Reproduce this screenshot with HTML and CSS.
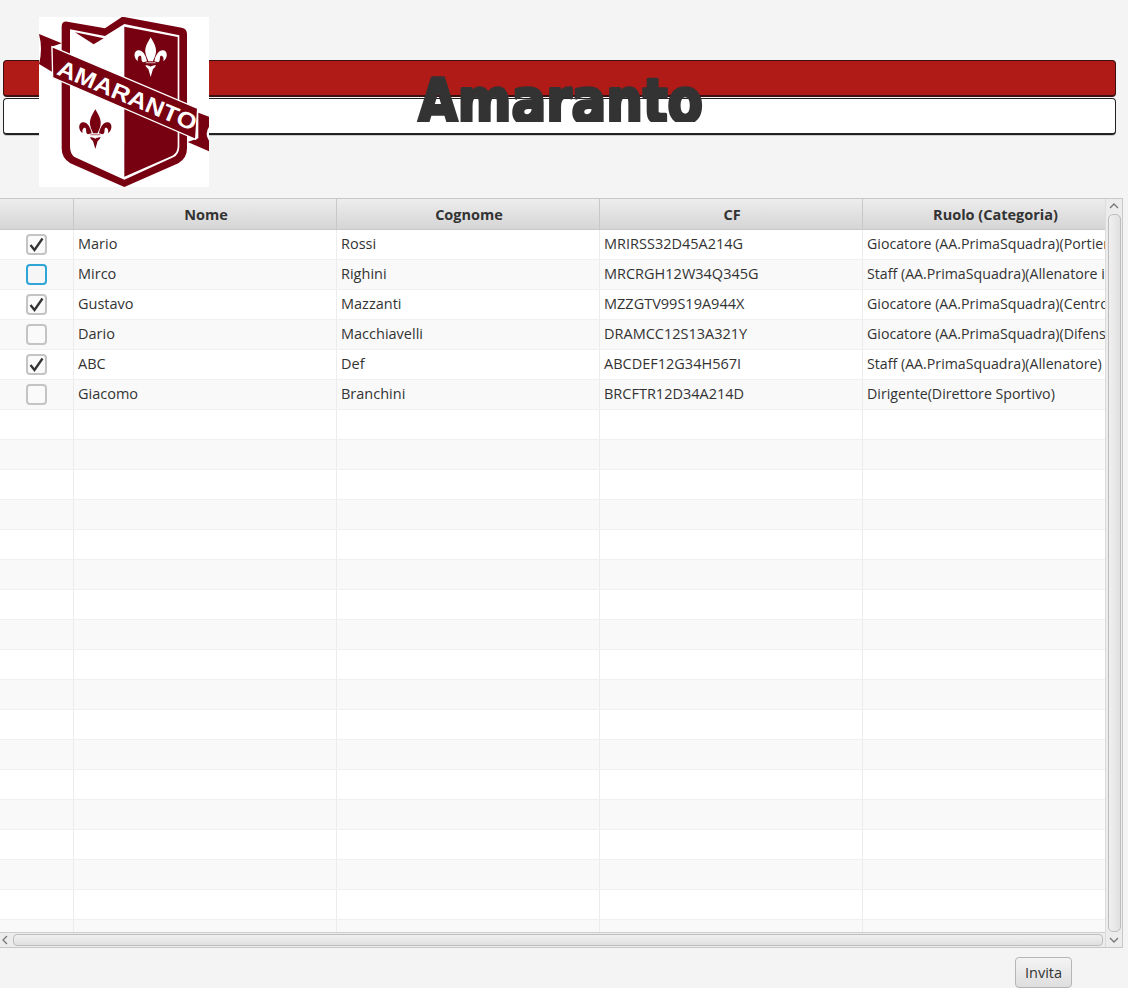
FILE: index.html
```html
<!DOCTYPE html>
<html lang="en">
<head>
  <meta charset="UTF-8" />
  <title>Amaranto</title>
  <link rel="stylesheet" href="styles.css">
</head>
<body>
  <div class="top">
    <div class="bar bar-red"></div>
    <div class="bar bar-white"></div>
    <svg class="title" viewBox="0 0 304 52" width="304" height="52">
      <text x="11" y="52" textLength="285" lengthAdjust="spacingAndGlyphs">Amaranto</text>
    </svg>
    <svg class="logo" viewBox="12 21 510 510" width="170" height="170">
      <defs>
        <g id="fleur">
          <path d="M0 0C9 16 20 32 15 50C13 60 8 66 7 72L-7 72C-8 66-13 60-15 50C-20 32-9 16 0 0Z"/>
          <path d="M11 72C15 50 27 36 39 39C53 44 50 64 38 72C41 60 34 52 29 57C26 63 30 72 22 75Z"/>
          <path d="M-11 72C-15 50-27 36-39 39C-53 44-50 64-38 72C-41 60-34 52-29 57C-26 63-30 72-22 75Z"/>
          <path d="M-16 84C-8 84-4 86 0 88C4 86 8 84 16 84C13 91 9 93 7 95L0 119L-7 95C-9 93-13 91-16 84Z"/>
        </g>
      </defs>
      <rect x="12" y="21" width="510" height="510" fill="#fff"/>
      <path fill="#770011" d="M80 50Q80 33 97 35L210 55L262 20L440 53Q456 56 456 72L456 415Q456 445 430 460L268 531L106 460Q80 445 80 415Z"/>
      <path fill="#fff" d="M105 58L210 78L268 42L433 76L433 410Q433 432 415 442L268 509L120 442Q105 432 105 410Z"/>
      <path fill="#770011" d="M268 50L428 81L428 408Q428 428 412 437L268 500Z"/>
      <path fill="#770011" d="M120 67L206 85L176 103Z"/>
      <path fill="#770011" d="M12 72L80 100L50 110L52 186L12 162Q24 118 12 72Z"/>
      <path fill="#770011" d="M522 320L522 424L458 396L490 385L490 308Z" />
      <path fill="#fff" d="M522 350Q508 372 522 392Z"/>
      <path fill="#770011" stroke="#fff" stroke-width="4" d="M51 110L488 295L482 388L53 203Z"/>
      <text class="logo-text" x="0" y="0" transform="translate(62 192) rotate(22.6)" textLength="446" lengthAdjust="spacingAndGlyphs">AMARANTO</text>
      <use href="#fleur" x="347" y="82" fill="#fff"/>
      <use href="#fleur" x="181" y="298" fill="#770011"/>
      <rect x="332" y="156" width="30" height="4" fill="#c98a92"/>
      <rect x="166" y="372" width="30" height="4" fill="#c98a92"/>
    </svg>
  </div>

  <div class="table">
    <div class="table-main">
      <div class="row head">
        <div class="cell"></div>
        <div class="cell">Nome</div>
        <div class="cell">Cognome</div>
        <div class="cell">CF</div>
        <div class="cell">Ruolo (Categoria)</div>
      </div>
      <div class="rows">
        <div class="row">
          <div class="cell check-cell"><span class="check"><svg viewBox="0 0 15 15" width="15" height="15"><path d="M1.5 8L5.5 13L13.5 1.5"/></svg></span></div>
          <div class="cell">Mario</div><div class="cell">Rossi</div><div class="cell">MRIRSS32D45A214G</div><div class="cell">Giocatore (AA.PrimaSquadra)(Portiere)</div>
        </div>
        <div class="row">
          <div class="cell check-cell"><span class="check focused"></span></div>
          <div class="cell">Mirco</div><div class="cell">Righini</div><div class="cell">MRCRGH12W34Q345G</div><div class="cell">Staff (AA.PrimaSquadra)(Allenatore in seconda)</div>
        </div>
        <div class="row">
          <div class="cell check-cell"><span class="check"><svg viewBox="0 0 15 15" width="15" height="15"><path d="M1.5 8L5.5 13L13.5 1.5"/></svg></span></div>
          <div class="cell">Gustavo</div><div class="cell">Mazzanti</div><div class="cell">MZZGTV99S19A944X</div><div class="cell">Giocatore (AA.PrimaSquadra)(Centrocampista)</div>
        </div>
        <div class="row">
          <div class="cell check-cell"><span class="check"></span></div>
          <div class="cell">Dario</div><div class="cell">Macchiavelli</div><div class="cell">DRAMCC12S13A321Y</div><div class="cell">Giocatore (AA.PrimaSquadra)(Difensore)</div>
        </div>
        <div class="row">
          <div class="cell check-cell"><span class="check"><svg viewBox="0 0 15 15" width="15" height="15"><path d="M1.5 8L5.5 13L13.5 1.5"/></svg></span></div>
          <div class="cell">ABC</div><div class="cell">Def</div><div class="cell">ABCDEF12G34H567I</div><div class="cell">Staff (AA.PrimaSquadra)(Allenatore)</div>
        </div>
        <div class="row">
          <div class="cell check-cell"><span class="check"></span></div>
          <div class="cell">Giacomo</div><div class="cell">Branchini</div><div class="cell">BRCFTR12D34A214D</div><div class="cell">Dirigente(Direttore Sportivo)</div>
        </div>
        <div class="row"><div class="cell"></div><div class="cell"></div><div class="cell"></div><div class="cell"></div><div class="cell"></div></div>
        <div class="row"><div class="cell"></div><div class="cell"></div><div class="cell"></div><div class="cell"></div><div class="cell"></div></div>
        <div class="row"><div class="cell"></div><div class="cell"></div><div class="cell"></div><div class="cell"></div><div class="cell"></div></div>
        <div class="row"><div class="cell"></div><div class="cell"></div><div class="cell"></div><div class="cell"></div><div class="cell"></div></div>
        <div class="row"><div class="cell"></div><div class="cell"></div><div class="cell"></div><div class="cell"></div><div class="cell"></div></div>
        <div class="row"><div class="cell"></div><div class="cell"></div><div class="cell"></div><div class="cell"></div><div class="cell"></div></div>
        <div class="row"><div class="cell"></div><div class="cell"></div><div class="cell"></div><div class="cell"></div><div class="cell"></div></div>
        <div class="row"><div class="cell"></div><div class="cell"></div><div class="cell"></div><div class="cell"></div><div class="cell"></div></div>
        <div class="row"><div class="cell"></div><div class="cell"></div><div class="cell"></div><div class="cell"></div><div class="cell"></div></div>
        <div class="row"><div class="cell"></div><div class="cell"></div><div class="cell"></div><div class="cell"></div><div class="cell"></div></div>
        <div class="row"><div class="cell"></div><div class="cell"></div><div class="cell"></div><div class="cell"></div><div class="cell"></div></div>
        <div class="row"><div class="cell"></div><div class="cell"></div><div class="cell"></div><div class="cell"></div><div class="cell"></div></div>
        <div class="row"><div class="cell"></div><div class="cell"></div><div class="cell"></div><div class="cell"></div><div class="cell"></div></div>
        <div class="row"><div class="cell"></div><div class="cell"></div><div class="cell"></div><div class="cell"></div><div class="cell"></div></div>
        <div class="row"><div class="cell"></div><div class="cell"></div><div class="cell"></div><div class="cell"></div><div class="cell"></div></div>
        <div class="row"><div class="cell"></div><div class="cell"></div><div class="cell"></div><div class="cell"></div><div class="cell"></div></div>
        <div class="row"><div class="cell"></div><div class="cell"></div><div class="cell"></div><div class="cell"></div><div class="cell"></div></div>
        <div class="row"><div class="cell"></div><div class="cell"></div><div class="cell"></div><div class="cell"></div><div class="cell"></div></div>
      </div>
      <div class="hscroll">
        <svg class="arrow" viewBox="0 0 10 10" width="10" height="10"><path d="M7 1L3 5L7 9"/></svg>
        <div class="hthumb"></div>
      </div>
    </div>
    <div class="vscroll">
      <svg class="arrow" viewBox="0 0 10 10" width="10" height="10"><path d="M1 7L5 3L9 7"/></svg>
      <div class="vthumb"></div>
      <svg class="arrow" viewBox="0 0 10 10" width="10" height="10"><path d="M1 3L5 7L9 3"/></svg>
    </div>
  </div>

  <div class="actions">
    <button type="button" class="btn">Invita</button>
  </div>
</body>
</html>
```

FILE: styles.css
```css
* {
  box-sizing: border-box;
}

html, body {
  margin: 0;
  padding: 0;
  width: 1128px;
  height: 988px;
  overflow: hidden;
  background: #f4f4f4;
  font-family: 'Open Sans', 'Noto Sans', sans-serif;
  font-size: 14.5px;
  color: #333;
}

.top {
  position: relative;
  height: 198px;
  padding: 60px 12px 0 3px;
}

.bar {
  height: 37px;
  border: 1px solid #222;
  border-radius: 4px;
}

.bar-red {
  background: #b01a17;
  border-color: #3a1010;
  border-bottom-width: 2px;
}

.bar-white {
  background: #fff;
  margin-top: 1px;
  border-bottom-width: 2px;
  box-shadow: 0 1px 0 #ccc;
}

.logo {
  position: absolute;
  left: 39px;
  top: 17px;
}

.logo-text {
  font-family: 'Liberation Sans', sans-serif;
  font-weight: 700;
  font-size: 68px;
  fill: #fff;
}

.title {
  position: absolute;
  left: 407px;
  top: 70px;
  font-family: 'DejaVu Sans', sans-serif;
  font-weight: 700;
  font-size: 61px;
  fill: #333;
  stroke: #333;
  stroke-width: 3.5px;
  stroke-linejoin: round;
}

.table {
  display: flex;
  width: 1123px;
  height: 750px;
  border-top: 1px solid #c8c8c8;
  border-right: 1px solid #c8c8c8;
  border-bottom: 1px solid #c8c8c8;
}

.table-main {
  display: flex;
  flex-direction: column;
  width: 1105px;
}

.row {
  display: grid;
  grid-template-columns: 74px 263px 263px 263px 263px;
  height: 30px;
  flex: none;
  overflow: hidden;
  background: #fff;
  border-bottom: 1px solid #f0f0f0;
}

.rows .row:nth-child(even) {
  background: #f9f9f9;
}

.cell {
  padding-left: 4px;
  line-height: 28px;
  white-space: nowrap;
  overflow: hidden;
  border-right: 1px solid #ececec;
}

.cell:last-child {
  border-right: none;
}

.rows .cell:last-child {
  font-size: 14.2px;
}

.head {
  height: 31px;
  background: linear-gradient(#ededed, #d5d5d5);
  border-bottom: 1px solid #c8c8c8;
}

.head .cell {
  padding: 0 0 0 2px;
  text-align: center;
  font-weight: 700;
  line-height: 31px;
  border-right-color: #c8c8c8;
}

.rows {
  flex: 1;
  min-height: 0;
  overflow: hidden;
}

.check-cell {
  display: flex;
  justify-content: center;
  align-items: center;
  padding: 0;
}

.check {
  display: flex;
  justify-content: center;
  align-items: center;
  width: 21px;
  height: 21px;
  background: #fafafa;
  border: 2px solid #c4c4c4;
  border-radius: 4px;
}

.check.focused {
  background: #f6f6f6;
  border-color: #2ea5d6;
}

.check svg {
  flex: none;
}

.check path {
  fill: none;
  stroke: #333;
  stroke-width: 2.3;
}

.hscroll {
  display: flex;
  align-items: center;
  flex: none;
  height: 15px;
  background: #ececec;
  border-top: 1px solid #cfcfcf;
}

.hscroll .arrow {
  flex: none;
  margin: 0 3px 0 0;
}

.hthumb {
  flex: 1;
  height: 12px;
  margin-right: 2px;
  background: linear-gradient(#f0f0f0, #e0e0e0);
  border: 1px solid #bdbdbd;
  border-radius: 4px;
}

.vscroll {
  display: flex;
  flex-direction: column;
  align-items: center;
  width: 17px;
  padding: 2px 0;
  background: #ececec;
  border-left: 1px solid #dcdcdc;
}

.vthumb {
  flex: 1;
  width: 13px;
  margin: 3px 0;
  background: linear-gradient(to right, #f0f0f0, #e0e0e0);
  border: 1px solid #bdbdbd;
  border-radius: 5px;
}

.arrow {
  flex: none;
}

.arrow path {
  fill: none;
  stroke: #777;
  stroke-width: 1.3;
}

.actions {
  display: flex;
  justify-content: flex-end;
  padding: 9px 56px 0 0;
}

.btn {
  width: 57px;
  height: 31px;
  padding: 0;
  font-family: inherit;
  font-size: 14.5px;
  color: #333;
  background: linear-gradient(#f4f4f4, #dedede);
  border: 1px solid #b5b5b5;
  border-radius: 4px;
}
```
